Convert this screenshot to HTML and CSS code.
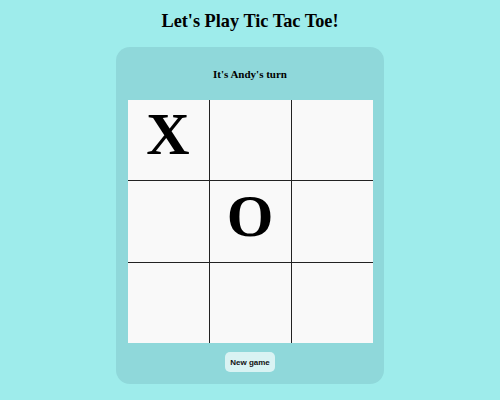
FILE: index.html
```html
<!DOCTYPE html>
<html>
<head>
<meta charset="utf-8">
<link rel="stylesheet" href="styles.css">
</head>
<body>
<h1 class="title">Let's Play Tic Tac Toe!</h1>
<div class="card">
  <div class="status">It's Andy's turn</div>
  <div class="board">
    <div class="cell">X</div>
    <div class="cell"></div>
    <div class="cell"></div>
    <div class="cell"></div>
    <div class="cell">O</div>
    <div class="cell"></div>
    <div class="cell"></div>
    <div class="cell"></div>
    <div class="cell"></div>
  </div>
  <button class="new-game">New game</button>
</div>
</body>
</html>
```
FILE: styles.css
```css
html, body {
  margin: 0;
  padding: 0;
}
body {
  background: #9eeceb;
  font-family: "Liberation Serif", "Times New Roman", serif;
  color: #000;
  padding-top: 10px;
}
.title {
  margin: 0 0 15px 0;
  font-size: 18.3px;
  line-height: 22px;
  font-weight: bold;
  text-align: center;
}
.card {
  width: 268px;
  height: 337px;
  box-sizing: border-box;
  margin: 0 auto;
  background: #8fd8da;
  border-radius: 14px;
  padding-top: 20px;
  display: flex;
  flex-direction: column;
  align-items: center;
}
.status {
  font-size: 11px;
  line-height: 14px;
  font-weight: bold;
  margin-bottom: 19px;
}
.board {
  display: grid;
  grid-template-columns: 81px 81px 81px;
  grid-template-rows: 80px 81px 80px;
  gap: 1px;
  background: #222;
}
.cell {
  background: #f9f9f9;
  display: flex;
  align-items: center;
  justify-content: center;
  font-size: 60px;
  font-weight: bold;
  line-height: 1;
  padding-bottom: 12px;
  box-sizing: border-box;
}
.new-game {
  margin-top: 9px;
  width: 50px;
  height: 20px;
  padding: 0;
  border: none;
  border-radius: 5px;
  background: #d9f3f3;
  font-family: "Liberation Sans", Arial, sans-serif;
  font-size: 8px;
  font-weight: bold;
  color: #111;
}
```
